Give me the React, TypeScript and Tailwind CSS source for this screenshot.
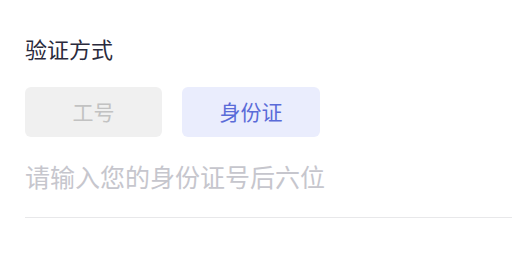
import React from 'react';

export default function App() {
  return (
    <div className="w-[525px] h-[261px] bg-white pl-[25px] pr-[13px] pt-[35px] font-['Noto_Sans_CJK_SC','Noto_Sans',sans-serif]">
      {/* 标题 */}
      <div className="text-[22px] leading-[26px] text-[#2a2a3c]">验证方式</div>

      {/* 切换按钮 */}
      <div className="flex gap-[20px] mt-[26px]">
        <button className="w-[137px] h-[50px] rounded-[6px] bg-[#f0f0f0] text-[21px] text-[#c2c2c2]">
          工号
        </button>
        <button className="w-[138px] h-[50px] rounded-[6px] bg-[#eaedfd] text-[21px] text-[#5a6bd8]">
          身份证
        </button>
      </div>

      {/* 输入框 */}
      <input
        className="mt-[22px] w-full h-[59px] pb-[25px] border-b border-[#e8e8ea] text-[25px] outline-none placeholder:text-[#c6c6cd]"
        placeholder="请输入您的身份证号后六位"
      />
    </div>
  );
}
